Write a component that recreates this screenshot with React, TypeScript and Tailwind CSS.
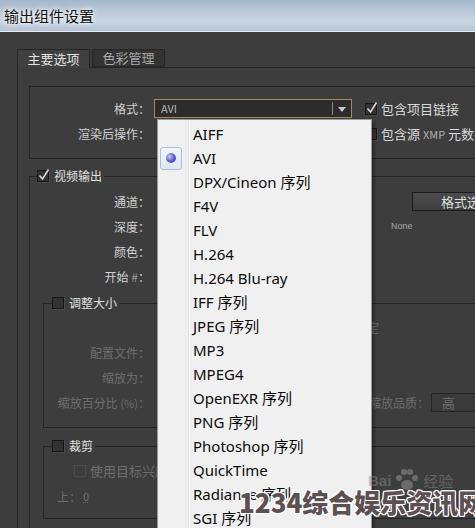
import React from "react";

function Check({ checked = false, disabled = false }: { checked?: boolean; disabled?: boolean }) {
  return (
    <span
      className={
        disabled
          ? "relative block w-[12px] h-[12px] shrink-0 border border-[#4c4c4c] bg-[#3d3d3d]"
          : "relative block w-[12px] h-[12px] shrink-0 border border-[#161616] bg-[#323232] shadow-[1px_1px_0_#4a4a4a]"
      }
    >
      {checked && (
        <svg width="14" height="14" viewBox="0 0 14 14" className="absolute left-[-1px] top-[-3px] overflow-visible">
          <path d="M2.5 7.5 L5.5 11 L11.5 1.5" fill="none" stroke="#d8d8d8" strokeWidth="1.6" />
        </svg>
      )}
    </span>
  );
}

const items = [
  "AIFF",
  "AVI",
  "DPX/Cineon 序列",
  "F4V",
  "FLV",
  "H.264",
  "H.264 Blu-ray",
  "IFF 序列",
  "JPEG 序列",
  "MP3",
  "MPEG4",
  "OpenEXR 序列",
  "PNG 序列",
  "Photoshop 序列",
  "QuickTime",
  "Radiance 序列",
  "SGI 序列",
];

export default function App() {
  return (
    <div className="relative w-[475px] h-[528px] overflow-hidden bg-[#4a6482] font-['Noto_Sans_CJK_SC','Noto_Sans',sans-serif]">
      {/* title bar */}
      <div className="h-[31px] flex items-center pl-[4px] bg-[linear-gradient(180deg,#a4b7cb_0%,#b9c8d8_35%,#c9d5e2_70%,#b3c4d6_100%)]">
        <span className="text-[15px] leading-none text-[#111] [text-shadow:0_0_6px_#ffffff,0_0_3px_#ffffff]">输出组件设置</span>
      </div>
      <div className="h-px bg-[#e4ebf2]" />
      {/* body */}
      <div className="flex h-[496px]">
        <div className="w-[3px] bg-[linear-gradient(180deg,#8ea3ba_0%,#5d7794_40%,#3c5674_100%)]" />
        <div className="w-[560px] bg-[#3d3d3d] text-[12px] text-[#d2d2d2]">
          {/* tabs */}
          <div className="flex pt-[17px] pl-[17px] h-[35px]">
            <div className="w-[73px] h-[19px] flex items-center justify-center border-t border-l border-r border-[#262626] bg-[#404040] text-[13px] text-[#e2e2e2] relative z-10">
              主要选项
            </div>
            <div className="ml-[2px] w-[73px] h-[18px] flex items-center justify-center border border-[#262626] bg-[#333333] text-[13px] text-[#a8a8a8]">
              色彩管理
            </div>
          </div>
          {/* panel */}
          <div className="ml-[17px] border-l border-t border-[#262626] pl-[11px] pt-[18px] h-[470px]">
            {/* group 1 */}
            <div className="border border-[#252525] h-[73px] pt-[9px]">
              <div className="flex items-center h-[25px]">
                <span className="w-[120px] text-right">格式：</span>
                <div className="ml-[4px] w-[198px] h-[19px] border border-[#a38b52] bg-[#2c2c2c] flex items-center">
                  <span className="pl-[6px] text-[11px] text-[#b5b5b5] flex-1">AVI</span>
                  <span className="w-px h-[13px] bg-[#8a8a8a]" />
                  <svg width="18" height="10" viewBox="0 0 18 10">
                    <path d="M5 3 L13 3 L9 8 Z" fill="#c8c8c8" />
                  </svg>
                </div>
                <span className="ml-[13px]">
                  <Check checked />
                </span>
                <span className="ml-[4px] text-[13px] text-[#dadada]">包含项目链接</span>
              </div>
              <div className="flex items-center h-[25px]">
                <span className="w-[120px] text-right">渲染后操作：</span>
                <span className="ml-[215px]">
                  <Check />
                </span>
                <span className="ml-[4px] text-[13px] text-[#dadada] whitespace-nowrap">
                  包含源 <span className="text-[11px] text-[#b0b0b0]">XMP</span> 元数据
                </span>
              </div>
            </div>

            {/* video output */}
            <fieldset className="mt-[10px] border border-[#252525] pt-[6px] pb-[30px]">
              <legend className="ml-[7px] pr-[2px]">
                <div className="flex items-center h-[14px] gap-[5px]">
                  <Check checked />
                  <span className="text-[12px] text-[#e0e0e0]">视频输出</span>
                </div>
              </legend>
              <div className="flex items-center h-[25px]">
                <span className="w-[120px] text-right">通道：</span>
                <div className="ml-[262px] w-[120px] h-[19px] border border-[#1c1c1c] bg-[linear-gradient(180deg,#4c4c4c,#3e3e3e)] flex items-center pl-[28px] text-[13px] text-[#dedede]">
                  格式选项
                </div>
              </div>
              <div className="flex items-center h-[25px]">
                <span className="w-[120px] text-right">深度：</span>
                <span className="ml-[241px] font-['Liberation_Sans',sans-serif] text-[9px] text-[#a6a6a6]">None</span>
              </div>
              <div className="flex items-center h-[25px]">
                <span className="w-[120px] text-right">颜色：</span>
              </div>
              <div className="flex items-center h-[25px]">
                <span className="w-[120px] text-right">
                  开始 <span className="text-[#9a9a9a]">#</span>：
                </span>
              </div>

              {/* resize */}
              <fieldset className="mt-[7px] ml-[13px] border border-[#252525] pt-[5px] pb-[12px]">
                <legend className="ml-[8px] pr-[2px]">
                  <div className="flex items-center h-[14px] gap-[5px]">
                    <Check />
                    <span className="text-[12px] text-[#e0e0e0]">调整大小</span>
                  </div>
                </legend>
                <div className="flex items-center h-[25px]">
                  <span className="ml-[311px] text-[#6e6e6e]">锁定</span>
                </div>
                <div className="flex items-center h-[25px]">
                  <span className="w-[106px] text-right text-[#6e6e6e]">配置文件：</span>
                </div>
                <div className="flex items-center h-[25px]">
                  <span className="w-[106px] text-right text-[#6e6e6e]">缩放为：</span>
                </div>
                <div className="flex items-center h-[25px]">
                  <span className="w-[106px] text-right text-[#6e6e6e] whitespace-nowrap">
                    缩放百分比 <span className="text-[11px]">(%)</span>：
                  </span>
                  <span className="ml-[219px] text-[#6e6e6e] whitespace-nowrap">缩放品质：</span>
                  <div className="ml-[2px] w-[70px] h-[19px] border border-[#252525] bg-[#3a3a3a] flex items-center pl-[10px] text-[#707070] text-[13px]">
                    高
                  </div>
                </div>
              </fieldset>

              {/* crop */}
              <fieldset className="mt-[11px] ml-[13px] border border-[#252525] pt-[5px] pb-[8px]">
                <legend className="ml-[8px] pr-[2px]">
                  <div className="flex items-center h-[14px] gap-[5px]">
                    <Check />
                    <span className="text-[12px] text-[#e0e0e0]">裁剪</span>
                  </div>
                </legend>
                <div className="flex items-center h-[25px]">
                  <span className="ml-[30px]">
                    <Check disabled />
                  </span>
                  <span className="ml-[4px] text-[13px] text-[#6e6e6e]">使用目标兴趣区域</span>
                </div>
                <div className="flex items-center h-[27px]">
                  <span className="ml-[13px] text-[#6e6e6e]">上：</span>
                  <span className="ml-[2px] text-[11px] text-[#6e6e6e] underline decoration-dotted">0</span>
                </div>
              </fieldset>
            </fieldset>
          </div>
        </div>
      </div>

      {/* dropdown menu */}
      <div className="absolute left-[157px] top-[119px] w-[215px] h-[430px] border border-[#9a9a9a] shadow-[2px_2px_3px_rgba(0,0,0,0.35)] pt-[2px] bg-[linear-gradient(to_right,#f0f0f0_30px,#e2e3e3_30px,#e2e3e3_31px,#ffffff_31px,#ffffff_32px,#f0f0f0_32px)] font-['Noto_Sans','Noto_Sans_CJK_SC',sans-serif] text-[15px] text-[#0a0a0a]">
        {items.map((it) => (
          <div key={it} className="flex items-center h-[24px]">
            <div className="w-[30px] h-[24px] flex items-center">
              {it === "AVI" && (
                <div className="ml-[2px] w-[22px] h-[23px] rounded-[3px] border border-[#aabed6] bg-[linear-gradient(180deg,#f2f5fa,#dfe7f1)] flex items-center justify-center">
                  <span className="w-[10px] h-[10px] rounded-full bg-[radial-gradient(circle_at_35%_35%,#c8c8f4_0%,#6a6ad0_45%,#2e2e86_100%)]" />
                </div>
              )}
            </div>
            <span className="ml-[5px] whitespace-nowrap">{it}</span>
          </div>
        ))}
      </div>

      {/* baidu watermark */}
      <div className="absolute left-[368px] top-[468px] flex items-end gap-[2px] opacity-50">
        <span className="font-['Liberation_Sans',sans-serif] text-[15px] font-bold text-[#8a8a8a]">Bai</span>
        <svg width="28" height="24" viewBox="0 0 28 24">
          <circle cx="6" cy="10" r="3" fill="#9a9a9a" />
          <circle cx="11" cy="4" r="3" fill="#9a9a9a" />
          <circle cx="17" cy="4" r="3" fill="#9a9a9a" />
          <circle cx="22" cy="10" r="3" fill="#9a9a9a" />
          <ellipse cx="14" cy="17" rx="6" ry="5" fill="#9a9a9a" />
        </svg>
        <span className="text-[15px] text-[#8a8a8a]">经验</span>
      </div>

      {/* big watermark */}
      <div className="absolute left-[239px] top-[484px] whitespace-nowrap font-['Noto_Sans_CJK_SC',sans-serif] font-black text-[26px] leading-[36px] text-[#5c5052] [text-shadow:1px_0_0_#ffffff,-1px_0_0_#ffffff,0_1px_0_#ffffff,0_-1px_0_#ffffff,1px_1px_0_#ffffff,-1px_-1px_0_#ffffff,1px_-1px_0_#ffffff,-1px_1px_0_#ffffff]">
        1234综合娱乐资讯网
      </div>
    </div>
  );
}
